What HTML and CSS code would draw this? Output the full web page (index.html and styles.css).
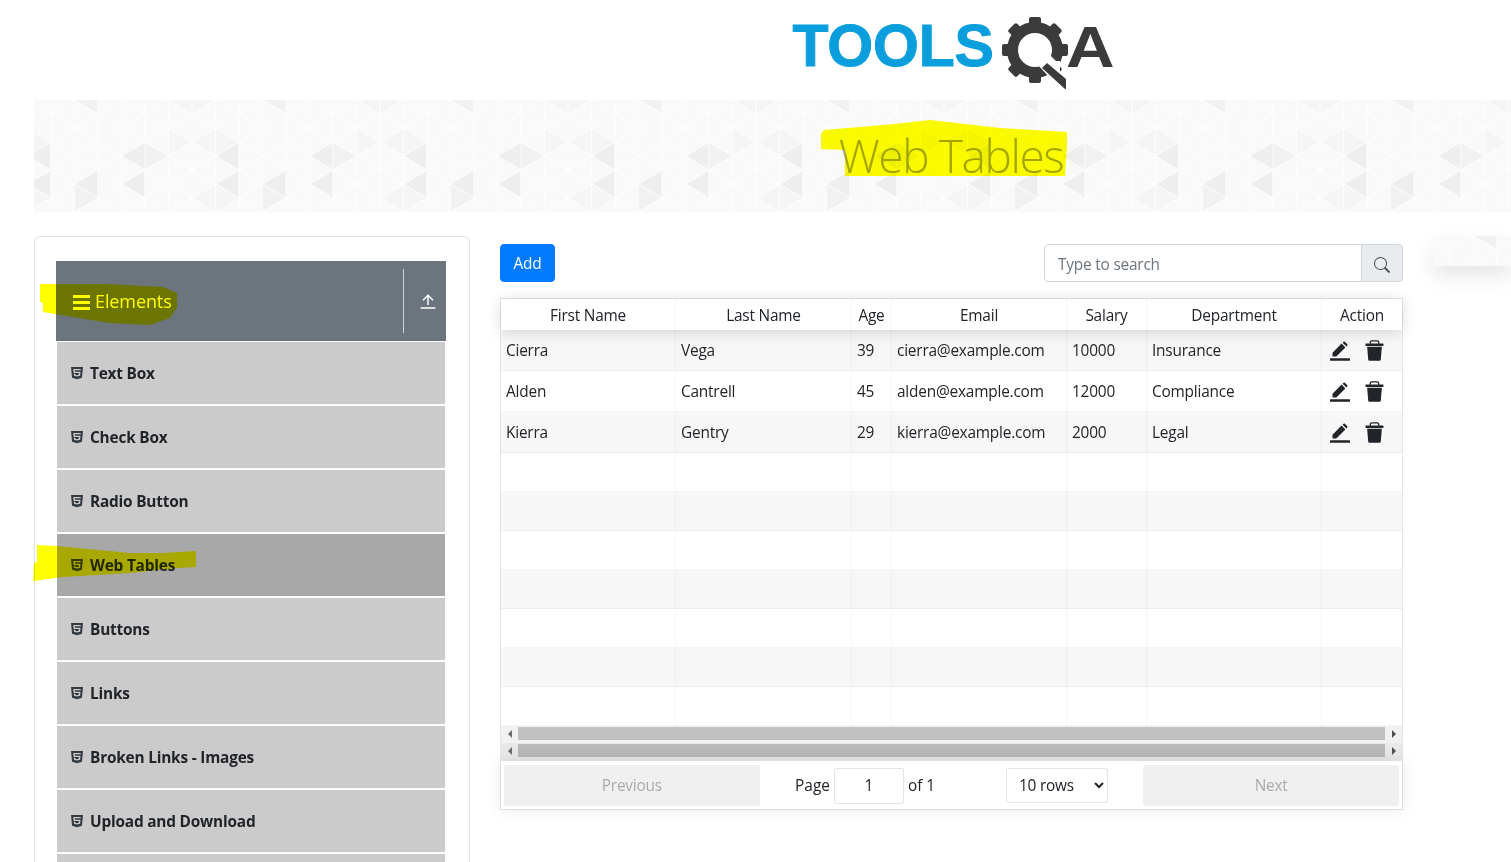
FILE: index.html
```html
<!DOCTYPE html>
<html lang="en">
<head>
  <meta charset="UTF-8" />
  <title>Web Tables</title>
  <meta name="viewport" content="width=device-width, initial-scale=1" />
  <link rel="stylesheet" href="styles.css">
</head>
<body>
  <svg class="defs" width="0" height="0" aria-hidden="true">
    <defs>
      <pattern id="lattice" width="47" height="28" patternUnits="userSpaceOnUse">
        <path d="M17 0V28M40.5 0V28M-6.5 0L17 14L-6.5 28M17 14L40.5 0M17 14L40.5 28M40.5 0L64 14L40.5 28" fill="none" stroke="#fff" stroke-opacity=".75" stroke-width="1.2"/>
      </pattern>
      <pattern id="shades" width="188" height="112" patternUnits="userSpaceOnUse">
        <g fill="#eeeeee">
          <path d="M87.5 56L111 42V70Z"/>
          <path d="M181.5 56L205 42V70Z"/>
          <path d="M-6.5 56L17 42V70Z"/>
          <path d="M40.5 84L64 70V98Z"/>
          <path d="M87.5 84L111 70V98Z"/>
          <path d="M181.5 84L205 70V98Z"/>
          <path d="M-6.5 84L17 70V98Z"/>
        </g>
        <g fill="#f1f1f1">
          <path d="M111 42V70L134.5 56Z"/>
          <path d="M40.5 84L64 98L40.5 112Z"/>
          <path d="M40.5 0L64 -14V14Z"/>
        </g>
        <g fill="#f5f5f5">
          <path d="M134.5 28L158 42L134.5 56Z"/>
          <path d="M158 42L181.5 28V56Z"/>
          <path d="M181.5 28L205 42L181.5 56Z"/>
          <path d="M-6.5 28L17 42L-6.5 56Z"/>
          <path d="M134.5 0L158 -14V14Z"/>
          <path d="M158 -14V14L181.5 0Z"/>
          <path d="M158 98L181.5 84V112Z"/>
          <path d="M181.5 84L205 98L181.5 112Z"/>
          <path d="M-6.5 84L17 98L-6.5 112Z"/>
        </g>
      </pattern>
      <symbol id="html5" viewBox="0 0 384 512" preserveAspectRatio="none">
        <path fill="currentColor" d="M0 32l34.9 395.8L191.5 480l157.6-52.2L384 32H0zm308.2 127.9H124.4l4.1 49.4h175.6l-13.6 148.4-97.9 27v.3h-1.1l-98.7-27.3-6-75.8h47.7L138 320l53.5 14.5 53.7-14.5 6-62.2H84.3L71.5 112.2h241.1l-4.4 47.7z"/>
      </symbol>
      <symbol id="pen" viewBox="0 0 20 20">
        <path fill="currentColor" d="M2.500 15.500V11.700L11.600 2.600 15.400 6.400 6.300 15.500ZM12.600 1.700L13.700.8C14 .5 14.500.5 14.800.8L17.300 3.300C17.600 3.600 17.600 4.100 17.300 4.400L16.400 5.400Z"/>
        <rect x="0" y="17.300" width="20" height="2.500" rx=".5" fill="currentColor"/>
      </symbol>
      <symbol id="bin" viewBox="0 0 18 20">
        <path fill="currentColor" d="M1 3.400h16a.6.6 0 0 1 .6.6v1a.6.6 0 0 1-.6.6H1A.6.6 0 0 1 .4 5V4a.6.6 0 0 1 .6-.6ZM2 6.500h14l-1 12c-.1.800-.7 1.300-1.500 1.300h-9c-.8 0-1.400-.5-1.500-1.300l-1-12Z"/>
        <path fill="none" stroke="currentColor" stroke-width="1.300" d="M5 3.500V2.200C5 1.300 5.600.8 6.400.8h5.200c.8 0 1.400.5 1.400 1.400v1.300"/>
      </symbol>
    </defs>
  </svg>

  <header class="logo-bar">
    <a class="logo" href="#">
      <span class="logo-tools">TOOLS</span>
      <svg class="logo-gear" viewBox="0 0 72 76" width="72" height="76" aria-hidden="true">
        <g fill="#3b3b3b">
          <g id="teeth">
            <rect x="29" y="0" width="12" height="12" rx="2"/>
            <rect x="29" y="0" width="12" height="12" rx="2" transform="rotate(45 35 33)"/>
            <rect x="29" y="0" width="12" height="12" rx="2" transform="rotate(90 35 33)"/>
            <rect x="29" y="0" width="12" height="12" rx="2" transform="rotate(135 35 33)"/>
            <rect x="29" y="0" width="12" height="12" rx="2" transform="rotate(180 35 33)"/>
            <rect x="29" y="0" width="12" height="12" rx="2" transform="rotate(225 35 33)"/>
            <rect x="29" y="0" width="12" height="12" rx="2" transform="rotate(270 35 33)"/>
            <rect x="29" y="0" width="12" height="12" rx="2" transform="rotate(315 35 33)"/>
          </g>
          <circle cx="35" cy="33" r="22.500" fill="none" stroke="#3b3b3b" stroke-width="11"/>
          <path d="M38 48L50 38L56 44L60 44V72Z" fill="#fff"/>
          <path d="M42 51L47 46L66 62V72L65 72Z"/>
        </g>
      </svg>
      <span class="logo-a">A</span>
    </a>
  </header>

  <div class="banner">
    <svg class="pattern" aria-hidden="true"><rect width="100%" height="100%" fill="#f9f9f9"/><rect width="100%" height="100%" fill="url(#shades)"/><rect width="100%" height="100%" fill="url(#lattice)"/></svg>
    <h1 class="banner-title">Web Tables</h1>
  </div>

  <div class="content">
    <nav class="sidebar">
      <div class="group-header">
        <div class="group-title">
          <span class="burger"><i></i><i></i><i></i></span>
          <span>Elements</span>
        </div>
        <div class="group-toggle">
          <svg viewBox="0 0 16 16" width="16" height="16" aria-hidden="true"><path d="M8 12V2.500M3 7.200L8 2.200L13 7.200M.5 15h15" fill="none" stroke="#fff" stroke-width="1.500"/></svg>
        </div>
      </div>
      <a class="menu-item" href="#"><svg class="h5"><use href="#html5"/></svg>Text Box</a>
      <a class="menu-item" href="#"><svg class="h5"><use href="#html5"/></svg>Check Box</a>
      <a class="menu-item" href="#"><svg class="h5"><use href="#html5"/></svg>Radio Button</a>
      <a class="menu-item active" href="#"><svg class="h5"><use href="#html5"/></svg>Web Tables</a>
      <a class="menu-item" href="#"><svg class="h5"><use href="#html5"/></svg>Buttons</a>
      <a class="menu-item" href="#"><svg class="h5"><use href="#html5"/></svg>Links</a>
      <a class="menu-item" href="#"><svg class="h5"><use href="#html5"/></svg>Broken Links - Images</a>
      <a class="menu-item" href="#"><svg class="h5"><use href="#html5"/></svg>Upload and Download</a>
      <a class="menu-item" href="#"></a>
    </nav>

    <main class="main">
      <div class="toolbar">
        <button class="add-btn">Add</button>
        <div class="search">
          <input class="search-input" type="text" placeholder="Type to search">
          <span class="search-btn">
            <svg viewBox="0 0 16 16" width="16" height="16" aria-hidden="true"><path fill="#495057" d="M11.742 10.344a6.500 6.500 0 1 0-1.397 1.398l3.850 3.850a1 1 0 0 0 1.415-1.414l-3.868-3.834zM12 6.500a5.500 5.500 0 1 1-11 0 5.500 5.500 0 0 1 11 0z"/></svg>
          </span>
        </div>
      </div>

      <div class="table-wrap">
        <div class="thead">
          <div class="row head-row">
            <div class="th">First Name</div><div class="th">Last Name</div><div class="th">Age</div><div class="th">Email</div><div class="th">Salary</div><div class="th">Department</div><div class="th">Action</div>
          </div>
        </div>
        <div class="tbody">
          <div class="row">
            <div class="td">Cierra</div><div class="td">Vega</div><div class="td">39</div><div class="td">cierra@example.com</div><div class="td">10000</div><div class="td">Insurance</div>
            <div class="td actions"><svg class="pen"><use href="#pen"/></svg><svg class="bin"><use href="#bin"/></svg></div>
          </div>
          <div class="row">
            <div class="td">Alden</div><div class="td">Cantrell</div><div class="td">45</div><div class="td">alden@example.com</div><div class="td">12000</div><div class="td">Compliance</div>
            <div class="td actions"><svg class="pen"><use href="#pen"/></svg><svg class="bin"><use href="#bin"/></svg></div>
          </div>
          <div class="row">
            <div class="td">Kierra</div><div class="td">Gentry</div><div class="td">29</div><div class="td">kierra@example.com</div><div class="td">2000</div><div class="td">Legal</div>
            <div class="td actions"><svg class="pen"><use href="#pen"/></svg><svg class="bin"><use href="#bin"/></svg></div>
          </div>
          <div class="row"><div class="td">&nbsp;</div><div class="td"></div><div class="td"></div><div class="td"></div><div class="td"></div><div class="td"></div><div class="td"></div></div>
          <div class="row"><div class="td">&nbsp;</div><div class="td"></div><div class="td"></div><div class="td"></div><div class="td"></div><div class="td"></div><div class="td"></div></div>
          <div class="row"><div class="td">&nbsp;</div><div class="td"></div><div class="td"></div><div class="td"></div><div class="td"></div><div class="td"></div><div class="td"></div></div>
          <div class="row"><div class="td">&nbsp;</div><div class="td"></div><div class="td"></div><div class="td"></div><div class="td"></div><div class="td"></div><div class="td"></div></div>
          <div class="row"><div class="td">&nbsp;</div><div class="td"></div><div class="td"></div><div class="td"></div><div class="td"></div><div class="td"></div><div class="td"></div></div>
          <div class="row"><div class="td">&nbsp;</div><div class="td"></div><div class="td"></div><div class="td"></div><div class="td"></div><div class="td"></div><div class="td"></div></div>
          <div class="row"><div class="td">&nbsp;</div><div class="td"></div><div class="td"></div><div class="td"></div><div class="td"></div><div class="td"></div><div class="td"></div></div>
        </div>

        <div class="scrollbars">
          <div class="scrollbar"><span class="arrow left"></span><span class="thumb"></span><span class="arrow right"></span></div>
          <div class="scrollbar second"><span class="arrow left"></span><span class="thumb"></span><span class="arrow right"></span></div>
        </div>

        <div class="pagination">
          <button class="page-btn" disabled>Previous</button>
          <div class="page-center">
            <span class="page-info">Page <input class="page-input" type="text" value="1"> of 1</span>
            <select class="page-size">
              <option>10 rows</option>
              <option>20 rows</option>
              <option>50 rows</option>
            </select>
          </div>
          <button class="page-btn" disabled>Next</button>
        </div>
      </div>
    </main>
  </div>

  <!-- floating strip on the right edge -->
  <div class="float-strip">
    <svg class="pattern" aria-hidden="true"><rect width="100%" height="100%" fill="#f9f9f9"/><rect width="100%" height="100%" fill="url(#shades)"/><rect width="100%" height="100%" fill="url(#lattice)"/></svg>
  </div>

  <!-- marker strokes on top of the page -->
  <svg class="marker" width="1511" height="862" aria-hidden="true">
    <path d="M821 134L824 130L895 124L930 120L1000 128L1067 132V146L1065 176H845V150L821 149Z"/>
    <path d="M40 284H107L163 287L177 293V308L170 318L150 325L110 323L73 317L43 312V303L40 302Z"/>
    <path d="M37 545L57 546L130 553H163L196 551V567L177 568L130 573L63 577L33 581L34 563L37 562Z"/>
  </svg>
</body>
</html>
```

FILE: styles.css
```css
* {
  box-sizing: border-box;
}

html, body {
  margin: 0;
  height: 862px;
  overflow: hidden;
}

body {
  position: relative;
  font-family: "Open Sans", "Noto Sans", Arial, sans-serif;
  font-size: 15.4px;
  letter-spacing: -.2px;
  line-height: 24px;
  color: #212529;
  background-color: #fff;
}

a {
  color: inherit;
  text-decoration: none;
}

.defs {
  position: absolute;
}

/* logo */
.logo-bar {
  height: 100px;
  display: flex;
  justify-content: center;
  padding-left: 395px;
}

.logo {
  display: flex;
  align-items: flex-start;
  width: 321px;
  font-family: "Liberation Sans", Arial, sans-serif;
  font-weight: 700;
  line-height: 1;
}

.logo-tools {
  font-size: 59px;
  margin-top: 17px;
  color: #0a9fdc;
  letter-spacing: -.2px;
  -webkit-text-stroke: 1px #0a9fdc;
}

.logo-gear {
  flex: none;
  margin: 17px 0 0 6px;
}

.logo-a {
  font-size: 58px;
  margin: 18px 0 0 -6px;
  color: #3b3b3b;
  transform: scaleX(1.16);
  transform-origin: left;
}

/* banner */
.banner {
  position: relative;
  height: 112px;
  margin-left: 34px;
  padding-left: 357px;
  display: flex;
  justify-content: center;
  align-items: center;
  overflow: hidden;
}

.pattern {
  position: absolute;
  top: 0;
  left: 0;
  width: 100%;
  height: 100%;
  filter: blur(.5px);
}

.banner-title {
  position: relative;
  margin: 0;
  font-size: 46px;
  font-weight: 300;
  letter-spacing: -1.4px;
  line-height: 1.2;
  color: #a5a5a5;
}

.float-strip {
  position: absolute;
  top: 236px;
  left: 1433px;
  width: 78px;
  height: 30px;
  box-shadow: 0 10px 20px rgba(0, 0, 0, .1);
}

.marker {
  position: absolute;
  top: 0;
  left: 0;
  mix-blend-mode: multiply;
  pointer-events: none;
}

.marker path {
  fill: #ff0;
}

/* layout */
.content {
  display: flex;
  gap: 30px;
  margin-left: 34px;
  padding-top: 24px;
}

/* sidebar */
.sidebar {
  flex: none;
  width: 436px;
  height: 626px;
  padding: 24px 23px 0 21px;
  border: 1px solid #dee2e6;
  border-bottom: 0;
  border-radius: 6px 6px 0 0;
  overflow: hidden;
}

.group-header {
  display: flex;
  height: 80px;
  background-color: #6c757d;
  color: #fff;
}

.group-title {
  flex: 1;
  display: flex;
  align-items: center;
  gap: 5px;
  padding-left: 17px;
  font-size: 18px;
  letter-spacing: -.1px;
}

.burger {
  display: flex;
  flex-direction: column;
  gap: 3px;
  margin-top: 3px;
  width: 17px;
}

.burger i {
  display: block;
  height: 3px;
  background-color: #fff;
}

.group-toggle {
  width: 43px;
  margin: 8px 0;
  border-left: 1px solid #ced4da;
  display: flex;
  align-items: center;
  justify-content: center;
  padding-left: 5px;
}

.menu-item {
  display: flex;
  align-items: center;
  height: 64px;
  padding: 2px 0 0 14px;
  border: 1px solid #fff;
  background-color: #cbcbcb;
  font-weight: 700;
  color: #212529;
}

.menu-item.active {
  background-color: #a8a8a8;
}

.h5 {
  width: 12px;
  height: 14px;
  margin: 0 7px 2px 0;
  color: #343a40;
}

/* toolbar */
.main {
  flex: none;
  width: 903px;
  padding-top: 8px;
}

.toolbar {
  display: flex;
  justify-content: space-between;
  margin-bottom: 16px;
}

.add-btn {
  height: 38px;
  width: 55px;
  padding: 2px 0 0;
  border: 1px solid #007bff;
  border-radius: 4px;
  background-color: #007bff;
  color: #fff;
  font: inherit;
  letter-spacing: inherit;
}

.search {
  display: flex;
  width: 359px;
  height: 38px;
}

.search-input {
  flex: 1;
  min-width: 0;
  padding: 9px 12px 5px 13px;
  border: 1px solid #ced4da;
  border-radius: 4px 0 0 4px;
  font: inherit;
  letter-spacing: inherit;
  color: #495057;
}

.search-input::placeholder {
  color: #6c757d;
}

.search-btn {
  width: 42px;
  display: flex;
  align-items: center;
  justify-content: center;
  padding-top: 3px;
  margin-left: -1px;
  border: 1px solid #ced4da;
  border-radius: 0 4px 4px 0;
  background-color: #e9ecef;
}

/* table */
.table-wrap {
  border: 1px solid rgba(0, 0, 0, .1);
}

.thead {
  position: relative;
  box-shadow: 0 2px 15px 0 rgba(0, 0, 0, .15);
}

.row {
  display: grid;
  grid-template-columns: 175px 176px 40px 175px 80px 175px 80px;
  border-bottom: 1px solid rgba(0, 0, 0, .04);
}

.head-row {
  border-bottom: 0;
}

.tbody .row:nth-child(odd) {
  background-color: rgba(0, 0, 0, .03);
}

.th, .td {
  padding: 9px 5px 5px;
  border-right: 1px solid rgba(0, 0, 0, .04);
  white-space: nowrap;
  overflow: hidden;
}

.th {
  padding: 5px 5px 2px;
  text-align: center;
}

.th:last-child, .td:last-child {
  border-right: 0;
}

.actions {
  display: flex;
  align-items: center;
  padding: 8px 0 7px 8px;
  height: 40px;
  color: #212529;
}

.pen {
  width: 20px;
  height: 20px;
}

.bin {
  width: 19px;
  height: 21px;
  margin-left: 15px;
}

/* scrollbars */
.scrollbars {
  background-color: #f1f1f1;
}

.scrollbar {
  display: flex;
  align-items: center;
  height: 17px;
  padding-bottom: 2px;
}

.scrollbar.second {
  height: 18px;
  padding-bottom: 3px;
  background-color: #e8e8e8;
}

.scrollbar.second .thumb {
  background-color: #b9b9b9;
}

.thumb {
  flex: 1;
  height: 13px;
  background-color: #c1c1c1;
}

.arrow {
  flex: none;
  width: 17px;
  display: flex;
  justify-content: center;
}

.arrow::before {
  content: "";
  border-style: solid;
  border-width: 4px 0;
  border-color: transparent;
}

.arrow.left::before {
  border-right: 4px solid #6b6b6b;
}

.arrow.right::before {
  border-left: 4px solid #505050;
}

/* pagination */
.pagination {
  position: relative;
  display: flex;
  padding: 4px 3px 3px;
  box-shadow: 0 0 15px 0 rgba(0, 0, 0, .1);
  height: 48px;
  background-color: #fff;
}

.page-btn {
  flex: 1;
  padding: 0;
  border: 0;
  border-radius: 3px;
  background-color: rgba(0, 0, 0, .06);
  color: rgba(0, 0, 0, .3);
  font: inherit;
  letter-spacing: inherit;
  height: 41px;
}

.page-center {
  flex: 1.5;
  display: flex;
  align-items: center;
  justify-content: space-around;
}

.page-info {
  display: flex;
  align-items: center;
  gap: 4px;
  letter-spacing: 0;
}

.page-input {
  width: 70px;
  height: 36px;
  border: 1px solid rgba(0, 0, 0, .1);
  border-radius: 3px;
  text-align: center;
  font: inherit;
  color: inherit;
}

.page-size {
  width: 102px;
  height: 35px;
  padding: 0 8px;
  border: 1px solid rgba(0, 0, 0, .1);
  border-radius: 3px;
  background-color: #fff;
  font: inherit;
  letter-spacing: inherit;
  color: inherit;
}
```
